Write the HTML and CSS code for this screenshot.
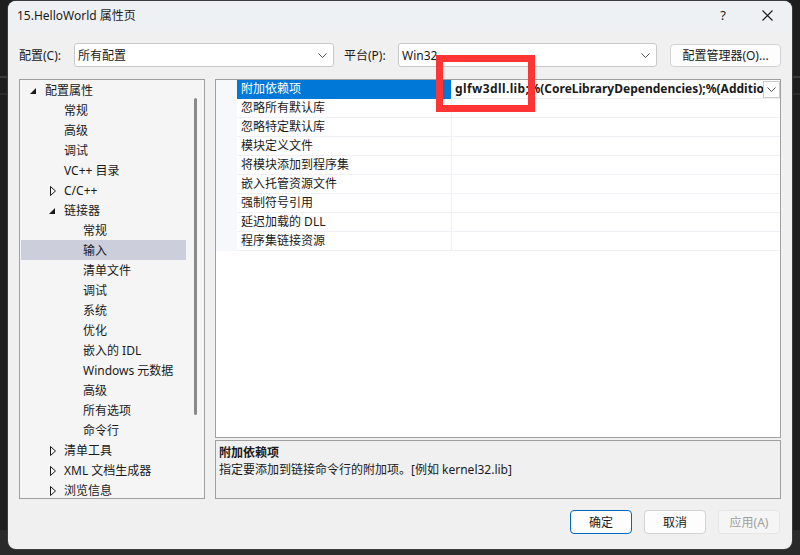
FILE: index.html
```html
<!DOCTYPE html>
<html lang="zh-CN">
<head>
  <meta charset="UTF-8" />
  <meta name="viewport" content="width=device-width, initial-scale=1.0"/>
  <title>15.HelloWorld 属性页</title>
  <link rel="stylesheet" href="styles.css">
</head>
<body>
  <div class="screen">
    <div class="dialog">
      <div class="titlebar">
        <span class="title">15.HelloWorld 属性页</span>
        <div class="title-btns">
          <span class="help">?</span>
          <svg class="close-x" width="11" height="11" viewBox="0 0 11 11"><path d="M0.5 0.5 L10.5 10.5 M10.5 0.5 L0.5 10.5" stroke="#1a1a1a" stroke-width="1.1" fill="none"/></svg>
        </div>
      </div>

      <div class="content">
        <div class="toolbar">
          <label class="lbl lbl-config">配置(C):</label>
          <div class="combo combo-config">
            <span>所有配置</span>
            <svg class="chev" width="9" height="5" viewBox="0 0 9 5"><polyline points="0.5,0.5 4.5,4.5 8.5,0.5" fill="none" stroke="#555" stroke-width="1"/></svg>
          </div>
          <label class="lbl lbl-platform">平台(P):</label>
          <div class="combo combo-platform">
            <span>Win32</span>
            <svg class="chev" width="9" height="5" viewBox="0 0 9 5"><polyline points="0.5,0.5 4.5,4.5 8.5,0.5" fill="none" stroke="#555" stroke-width="1"/></svg>
          </div>
          <button class="btn btn-manager">配置管理器(O)...</button>
        </div>

        <div class="panels">
          <div class="tree">
            <ul class="tree-list" id="treeList"></ul>
            <div class="tree-scroll"><div class="thumb"></div></div>
          </div>

          <div class="right">
            <div class="grid" id="propGrid"></div>
            <div class="desc">
              <div class="desc-title">附加依赖项</div>
              <div class="desc-text">指定要添加到链接命令行的附加项。[例如 kernel32.lib]</div>
            </div>
          </div>
        </div>

        <div class="footer">
          <button class="btn btn-ok">确定</button>
          <button class="btn">取消</button>
          <button class="btn btn-disabled">应用(A)</button>
        </div>
      </div>
    </div>
    <div class="highlight"></div>
  </div>

  <script>
    // level, arrow ("open" / "closed" / ""), text
    const treeItems = [
      [0, "open", "配置属性"],
      [1, "", "常规"],
      [1, "", "高级"],
      [1, "", "调试"],
      [1, "", "VC++ 目录"],
      [1, "closed", "C/C++"],
      [1, "open", "链接器"],
      [2, "", "常规"],
      [2, "", "输入", true],
      [2, "", "清单文件"],
      [2, "", "调试"],
      [2, "", "系统"],
      [2, "", "优化"],
      [2, "", "嵌入的 IDL"],
      [2, "", "Windows 元数据"],
      [2, "", "高级"],
      [2, "", "所有选项"],
      [2, "", "命令行"],
      [1, "closed", "清单工具"],
      [1, "closed", "XML 文档生成器"],
      [1, "closed", "浏览信息"]
    ];

    const arrows = {
      open: '<svg width="6" height="6" viewBox="0 0 6 6"><polygon points="6,0 6,6 0,6" fill="#1a1a1a"/></svg>',
      closed: '<svg width="6" height="10" viewBox="0 0 6 10"><polygon points="0.5,0.5 5.5,5 0.5,9.5" fill="none" stroke="#1a1a1a" stroke-width="1"/></svg>'
    };

    const treeList = document.getElementById("treeList");
    treeItems.forEach(([level, arrow, text, selected]) => {
      const li = document.createElement("li");
      li.className = "tree-row lvl" + level + (selected ? " selected" : "");
      li.innerHTML = `<span class="arrow ${arrow}">${arrows[arrow] || ""}</span><span>${text}</span>`;
      treeList.appendChild(li);
    });

    const props = [
      "附加依赖项",
      "忽略所有默认库",
      "忽略特定默认库",
      "模块定义文件",
      "将模块添加到程序集",
      "嵌入托管资源文件",
      "强制符号引用",
      "延迟加载的 DLL",
      "程序集链接资源"
    ];

    const grid = document.getElementById("propGrid");
    props.forEach((name, i) => {
      const row = document.createElement("div");
      row.className = "prop-row" + (i === 0 ? " active" : "");
      let value = "";
      if (i === 0) {
        value = `<span class="val-text"><span class="lib">glfw3dll.lib;</span>%(CoreLibraryDependencies);%(AdditionalDependencies)</span>
          <span class="drop"><svg width="9" height="5" viewBox="0 0 9 5"><polyline points="0.5,0.5 4.5,4.5 8.5,0.5" fill="none" stroke="#555" stroke-width="1"/></svg></span>`;
      }
      row.innerHTML = `<div class="gutter"></div><div class="prop-name">${name}</div><div class="prop-val">${value}</div>`;
      grid.appendChild(row);
    });
  </script>
</body>
</html>
```

FILE: styles.css
```css
* { box-sizing: border-box; }
body { margin: 0; padding: 0; background: #1e1e1e; font-family: "Noto Sans", "Noto Sans CJK SC", sans-serif; font-size: 12px; color: #1a1a1a; }
.screen { position: relative; width: 800px; height: 555px; overflow: hidden; padding: 1px 8px 0 8px;
  background:
    linear-gradient(#3a3a3a, #3a3a3a) 0 76px / 100% 2px no-repeat,
    linear-gradient(#2c2c2c, #2c2c2c) 0 93px / 100% 2px no-repeat,
    linear-gradient(#2a2a2a, #2a2a2a) 0 530px / 100% 25px no-repeat,
    #1e1e1e; }

.dialog { width: 784px; height: 548px; background: #f0f0f0; border-radius: 8px; overflow: hidden; box-shadow: 0 0 0 1px #3c3c3c; }

.titlebar { height: 30px; background: #eef1f4; display: flex; align-items: center; justify-content: space-between; padding-left: 9px; }
.title { font-size: 12px; margin-top: -2px; }
.title-btns { display: flex; align-items: center; }
.help { font-size: 13px; width: 14px; text-align: center; margin-right: 32px; margin-top: -2px; }
.close-x { margin-right: 19px; margin-top: -2px; }

.content { padding: 12px 11px 0 11px; }

.toolbar { display: flex; align-items: center; height: 24px; }
.lbl { white-space: nowrap; }
.lbl-config { width: 55px; }
.lbl-platform { width: 54px; margin-left: 10px; }
.combo { height: 24px; background: #fff; border: 1px solid #c9c9c9; border-radius: 3px; display: flex; align-items: center; justify-content: space-between; padding: 0 6px 0 3px; }
.combo-config { width: 260px; }
.combo-platform { width: 259px; }
.chev { margin-top: 1px; }

.btn { font-family: inherit; font-size: 12px; color: #1a1a1a; background: #fdfdfd; border: 1px solid #d2d2d2; border-radius: 4px; height: 24px; padding: 0; cursor: pointer; }
.btn-manager { width: 111px; margin-left: 13px; height: 23px; }

.panels { display: flex; gap: 10px; margin-top: 12px; height: 420px; }

.tree { width: 186px; flex-shrink: 0; border: 1px solid #a0a0a0; background: #f5f5f5; display: flex; padding-left: 1px; }
.tree-list { list-style: none; margin: 0; padding: 0; width: 165px; flex-shrink: 0; }
.tree-row { height: 20px; display: flex; align-items: center; white-space: nowrap; }
.tree-row.selected { background: #cccedb; }
.tree-row.lvl0 { padding-left: 9px; }
.tree-row.lvl1 { padding-left: 28px; }
.tree-row.lvl2 { padding-left: 47px; }
.arrow { width: 15px; display: flex; align-items: center; }
.arrow.open svg { margin-top: 2px; }
.arrow.closed svg { margin-left: 1px; margin-top: 1px; }
.tree-scroll { flex: 1; }
.thumb { width: 3px; height: 317px; margin: 18px 0 0 8px; background: #8a8a8a; border-radius: 2px; }

.right { flex: 1; min-width: 0; display: flex; flex-direction: column; }
.grid { height: 359px; border: 1px solid #a0a0a0; background: #fff; }
.prop-row { display: flex; height: 19px; }
.gutter { width: 21px; flex-shrink: 0; background: #f6f8fb; }
.prop-name { width: 214px; flex-shrink: 0; padding-left: 4px; line-height: 18px; border-bottom: 1px solid #eef0f5; white-space: nowrap; }
.prop-val { flex: 1; min-width: 0; border-left: 1px solid #eef0f5; border-bottom: 1px solid #eef0f5; display: flex; align-items: center; overflow: hidden; }
.prop-row.active .prop-name { background: #0078d7; color: #fff; border-bottom-color: #0078d7; }
.val-text { font-weight: bold; padding-left: 3px; white-space: nowrap; overflow: hidden; flex: 1; min-width: 0; line-height: 18px; }
.val-text .lib { letter-spacing: 0.4px; }
.drop { width: 17px; height: 17px; border: 1px solid #cacaca; background: #fff; display: flex; align-items: center; justify-content: center; flex-shrink: 0; }

.desc { margin-top: 2px; height: 59px; border: 1px solid #a0a0a0; background: #f0f0f0; padding: 3px 3px; line-height: 17px; }
.desc-title { font-weight: bold; }

.footer { display: flex; justify-content: flex-end; gap: 12px; padding: 11px 1px 0 0; }
.footer .btn { width: 62px; }
.btn-ok { border: 1.5px solid #0067c0; }
.btn-disabled { background: #f5f5f5; color: #a0a0a0; border-color: #e6e6e6; }

.highlight { position: absolute; left: 436px; top: 55px; width: 99px; height: 57px; border: 7px solid #ff3535; }
```
